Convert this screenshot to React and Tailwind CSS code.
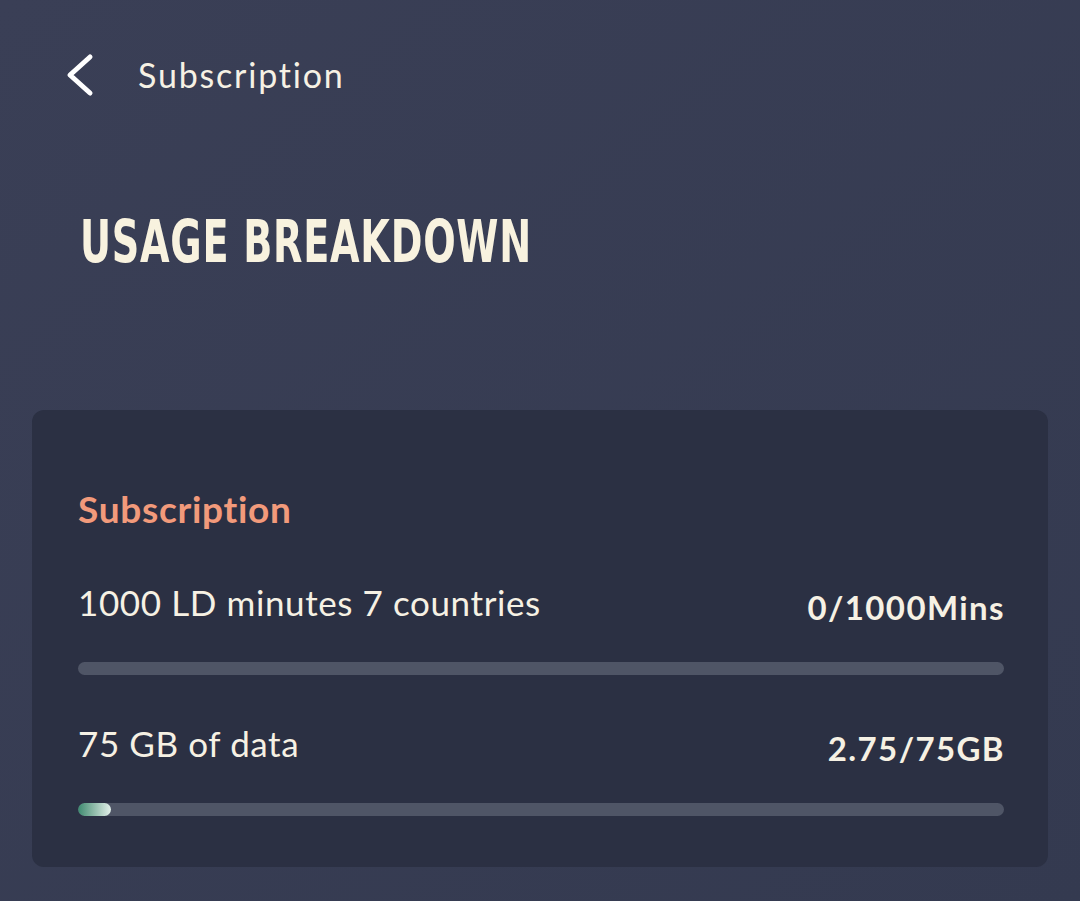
function BackChevron() {
  return (
    <svg width="32" height="44" viewBox="0 0 32 44" fill="none" className="shrink-0">
      <polyline
        points="26,4 6,22 26,40"
        stroke="#ffffff"
        strokeWidth="5"
        strokeLinecap="round"
        strokeLinejoin="round"
      />
    </svg>
  );
}

function UsageRow({ label, value, percent }) {
  return (
    <div>
      <div className="flex items-start justify-between">
        <div className="text-[35px] leading-none tracking-[0.6px] text-[#f6f1e4]">{label}</div>
        <div className="-mr-[1px] pt-[6px] text-[33px] font-bold leading-none tracking-[1.4px] text-[#f6f1e4]">
          {value}
        </div>
      </div>
      <div className="mt-[38px] h-[13px] w-full overflow-hidden rounded-full bg-[#4f5566]">
        {percent > 0 ? (
          <div
            className="h-full rounded-full bg-gradient-to-r from-[#3b8a70] to-[#e3f0ea]"
            style={{ width: `${percent}%` }}
          />
        ) : null}
      </div>
    </div>
  );
}

export default function App() {
  return (
    <div className="min-h-[901px] w-full bg-gradient-to-br from-[#3a3f56] to-[#343a50] font-['Lato',sans-serif]">
      {/* Header */}
      <div className="flex items-center pl-[64px] pt-[53px]">
        <BackChevron />
        <div className="ml-[42px] text-[34px] leading-none tracking-[1.8px] text-[#f6f1e4]">Subscription</div>
      </div>

      <h1 className="ml-[80px] mt-[115px] origin-left scale-x-[0.72] whitespace-nowrap font-['DejaVu_Sans',sans-serif] text-[59px] font-bold leading-none font-stretch-condensed tracking-[1px] text-[#f8f2df]">
        USAGE BREAKDOWN
      </h1>

      {/* Card */}
      <div className="mx-[32px] mt-[139px] rounded-[12px] bg-[#2b3043] pb-[51px] pl-[46px] pr-[44px] pt-[80px]">
        <div className="text-[37px] font-bold leading-none tracking-[0.7px] text-[#f29a7b]">Subscription</div>
        <div className="mt-[58px] space-y-[51px]">
          <UsageRow label="1000 LD minutes 7 countries" value="0/1000Mins" percent={0} />
          <UsageRow label="75 GB of data" value="2.75/75GB" percent={3.6} />
        </div>
      </div>
    </div>
  );
}
